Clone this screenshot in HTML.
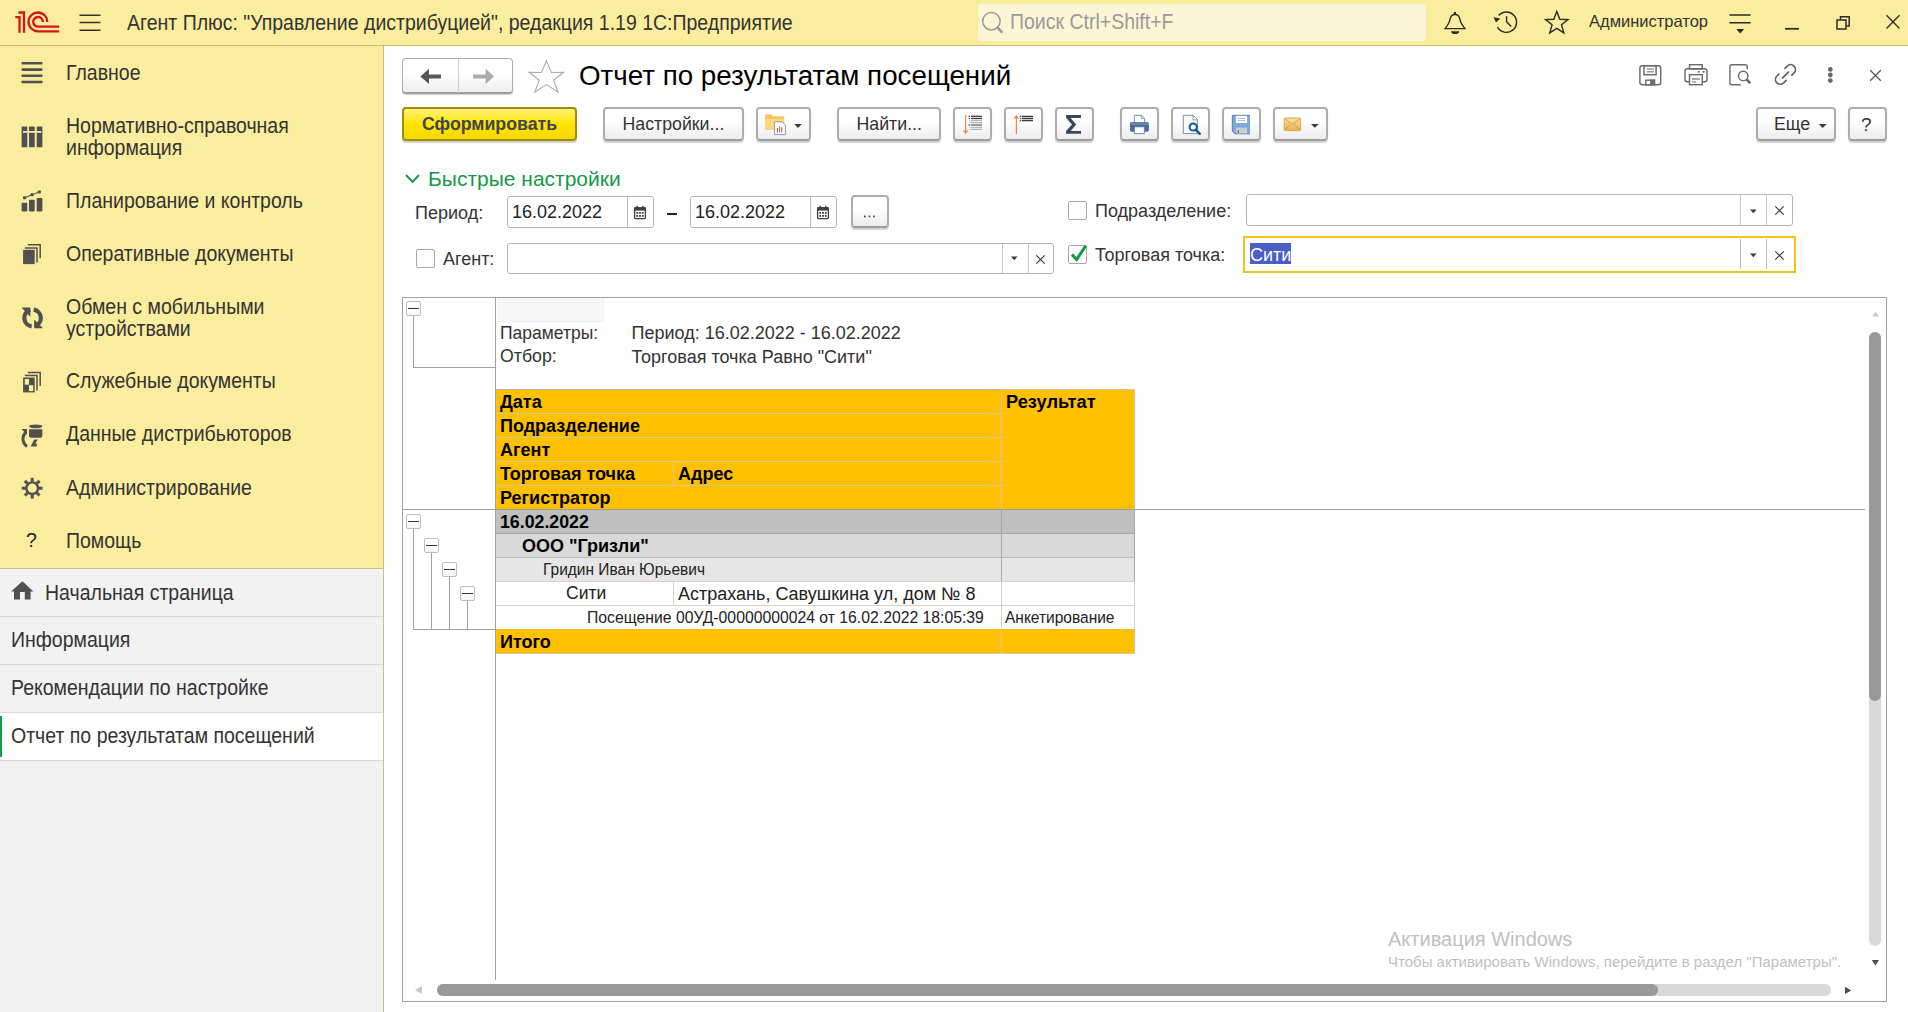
<!DOCTYPE html><html><head><meta charset="utf-8"><style>
html,body{margin:0;padding:0;width:1908px;height:1012px;overflow:hidden;background:#fff;font-family:"Liberation Sans",sans-serif;}
.a{position:absolute;box-sizing:border-box;}
.t{position:absolute;white-space:nowrap;line-height:1;transform-origin:0 0;}
</style></head><body>
<div class="a" style="left:0px;top:0px;width:1908px;height:45px;background:#FBED9E;"></div>
<div class="a" style="left:0px;top:45px;width:1908px;height:1px;background:#C7B96D;"></div>
<svg class="a" style="left:0px;top:0px;" width="62" height="40" viewBox="0 0 62 40"><g fill="none" stroke="#D7141A" stroke-width="2.3">
<path d="M15.3 17.1 H19.5 V32.8"/>
<path d="M18.4 12.5 H24 V32.8"/>
<path d="M47.3 22 A9.4 9.4 0 1 0 37.9 31.3 H59.2"/>
<path d="M42.8 22 A4.8 4.8 0 1 0 37.9 26.6 H59.2"/>
</g></svg>
<svg class="a" style="left:79px;top:0px;" width="23" height="40" viewBox="0 0 23 40"><g stroke="#333" stroke-width="1.5"><path d="M0.5 15.2H21.5M0.5 22.6H21.5M0.5 30.2H21.5"/></g></svg>
<div class="t" style="left:127px;top:11.94px;font-size:19.5px;color:#333;transform:scaleY(1.1);">Агент Плюс: "Управление дистрибуцией", редакция 1.19 1С:Предприятие</div>
<div class="a" style="left:978px;top:4px;width:448px;height:37px;background:#FDF6D6;border-radius:3px;"></div>
<svg class="a" style="left:970px;top:0px;" width="40" height="45" viewBox="0 0 40 45"><circle cx="21.4" cy="21.2" r="8.7" fill="none" stroke="#9a9a9a" stroke-width="1.5"/><path d="M26.8 27 L32.4 32.6" stroke="#9a9a9a" stroke-width="2.6"/></svg>
<div class="t" style="left:1010px;top:11.44px;font-size:19.5px;color:#9a9a9a;transform:scaleY(1.1);">Поиск Ctrl+Shift+F</div>
<svg class="a" style="left:1400px;top:0px;" width="508" height="45" viewBox="0 0 508 45"><g transform="translate(-1400 0)" fill="none" stroke="#2b2b2b" stroke-width="1.4">
<path d="M45 28.6 H65 C63 26 60.5 23.5 60 19.5 C59.5 16.5 58.5 14.5 55 14.5 C51.5 14.5 50.5 16.5 50 19.5 C49.5 23.5 47 26 45 28.6 Z" transform="translate(1400 0)"/>
<path d="M1497.5 27.2 A10.2 10.2 0 1 0 1498.6 15.5"/>
<path d="M1506.6 16.2 V21.8 L1511.2 26.6"/>
<path d="M1556.8 11.5 L1559.8 19.2 L1568 19.6 L1561.5 24.7 L1563.8 32.8 L1556.8 28.3 L1549.8 32.8 L1552.1 24.7 L1545.6 19.6 L1553.8 19.2 Z" stroke-linejoin="miter"/>
<path d="M1729.4 15.1 H1750.6 M1729.4 22.7 H1750.6" stroke-width="1.5"/>
<path d="M1785 28.8 H1799" stroke-width="1.7"/>
<rect x="1837" y="20" width="9" height="9" stroke-width="1.5"/>
<path d="M1840.5 19.5 V16.8 H1849.2 V25.9 H1846.5" stroke-width="1.5"/>
<path d="M1886.5 15.3 L1899.5 28.5 M1899.5 15.3 L1886.5 28.5" stroke-width="1.3"/>
</g>
<g transform="translate(-1400 0)" fill="#2b2b2b">
<circle cx="1454.9" cy="13" r="1.2"/>
<path d="M1451 31.2 H1459.3 A4.15 2.8 0 0 1 1451 31.2 Z"/>
<path d="M1493.5 17.2 L1500.3 18.4 L1496 22.6 Z"/>
<path d="M1736.3 29.1 H1744.1 L1740.2 33.6 Z"/>
</g></svg>
<div class="t" style="left:1589px;top:12.63px;font-size:16.5px;color:#333;">Администратор</div>
<div class="a" style="left:0px;top:46px;width:383px;height:522px;background:#FBED9E;"></div>
<div class="a" style="left:383px;top:46px;width:1px;height:966px;background:#CBC085;"></div>
<div class="a" style="left:0px;top:568px;width:383px;height:444px;background:#F2F2F2;"></div>
<div class="a" style="left:0px;top:568px;width:383px;height:1px;background:#CBBD80;"></div>
<div class="t" style="left:66px;top:61.64px;font-size:19.5px;color:#333;transform:scaleY(1.1);">Главное</div>
<div class="t" style="left:66px;top:114.84px;font-size:19.5px;color:#333;transform:scaleY(1.1);">Нормативно-справочная</div>
<div class="t" style="left:66px;top:137.34px;font-size:19.5px;color:#333;transform:scaleY(1.1);">информация</div>
<div class="t" style="left:66px;top:189.84px;font-size:19.5px;color:#333;transform:scaleY(1.1);">Планирование и контроль</div>
<div class="t" style="left:66px;top:242.84px;font-size:19.5px;color:#333;transform:scaleY(1.1);">Оперативные документы</div>
<div class="t" style="left:66px;top:295.84px;font-size:19.5px;color:#333;transform:scaleY(1.1);">Обмен с мобильными</div>
<div class="t" style="left:66px;top:318.34px;font-size:19.5px;color:#333;transform:scaleY(1.1);">устройствами</div>
<div class="t" style="left:66px;top:370.44px;font-size:19.5px;color:#333;transform:scaleY(1.1);">Служебные документы</div>
<div class="t" style="left:66px;top:422.84px;font-size:19.5px;color:#333;transform:scaleY(1.1);">Данные дистрибьюторов</div>
<div class="t" style="left:66px;top:476.54px;font-size:19.5px;color:#333;transform:scaleY(1.1);">Администрирование</div>
<div class="t" style="left:66px;top:529.54px;font-size:19.5px;color:#333;transform:scaleY(1.1);">Помощь</div>
<svg class="a" style="left:0px;top:0px;" width="60" height="520" viewBox="0 0 60 520"><g fill="#505050">
<rect x="21.5" y="62" width="21" height="2.6" rx="0.8"/><rect x="21.5" y="68.3" width="21" height="2.6" rx="0.8"/><rect x="21.5" y="74.5" width="21" height="2.6" rx="0.8"/><rect x="21.5" y="80.7" width="21" height="2.6" rx="0.8"/>
<rect x="21.6" y="126.6" width="5.7" height="20.7" rx="0.5"/><rect x="29" y="126.6" width="5.7" height="20.7" rx="0.5"/><rect x="36.7" y="126.6" width="5.7" height="20.7" rx="0.5"/>
<rect x="21.6" y="202.7" width="5.7" height="8.7" rx="0.8"/><rect x="29" y="199.8" width="5.7" height="11.6" rx="0.8"/><rect x="36.7" y="198" width="5.7" height="13.4" rx="0.8"/>
<rect x="23" y="196.3" width="3.2" height="3" rx="0.8"/><rect x="30.4" y="193.3" width="3.2" height="3" rx="0.8"/><rect x="37.8" y="190.4" width="3.2" height="3" rx="0.8"/>
<rect x="23.1" y="249.8" width="11.6" height="14.3"/>
<rect x="23.1" y="377.5" width="11.6" height="14.9"/>
</g>
<rect x="23" y="131" width="18.2" height="1.8" fill="#FBED9E"/>
<path d="M24.6 197.8 L32 194.8 L39.4 191.9" stroke="#505050" stroke-width="1.1" fill="none"/>
<g fill="none" stroke="#505050" stroke-width="1.5"><path d="M24.8 248 H37 V262.6"/><path d="M27.8 244.8 H40.2 V258.2"/>
<path d="M24.8 375.6 H37 V390.5"/><path d="M27.8 372.5 H40.2 V386"/></g>
<rect x="24.8" y="379" width="4.2" height="5.7" fill="#FBED9E"/><rect x="29" y="385.2" width="4.2" height="5.9" fill="#FBED9E"/>
<g fill="none" stroke="#505050" stroke-width="4.2"><path d="M30.3 309.95 A8.4 8.4 0 0 0 31.7 326.34"/><path d="M34.7 326.05 A8.4 8.4 0 0 0 33.7 309.66"/></g>
<path d="M21.5 307.6 H30.3 V316.8 Z M43 328.3 H34.2 V319.5 Z" fill="#505050"/>
<g fill="#505050"><ellipse cx="35.7" cy="426.3" rx="6.7" ry="1.9"/><path d="M29 429.3 H42.4 V435.2 A2.5 2.5 0 0 1 39.9 437.7 H31.5 A2.5 2.5 0 0 1 29 435.2 Z"/></g>
<path d="M26.3 432 A 9 9 0 0 0 27 446.4" fill="none" stroke="#505050" stroke-width="3"/>
<path d="M21.4 429 H27 V434.5 Z" fill="#505050"/>
<path d="M34.2 439.6 L37.8 439.6 L35.2 443.4 L36.9 443.4 L36.8 446.6 L30.8 446.6 L31.6 444.4 Z" fill="#505050"/>
<g fill="#505050"><circle cx="32.2" cy="488.2" r="7"/>
<g id="teeth"><rect x="30.7" y="477.8" width="3" height="4"/><rect x="30.7" y="494.6" width="3" height="4"/><rect x="21.8" y="486.7" width="4" height="3"/><rect x="38.6" y="486.7" width="4" height="3"/></g>
<g transform="rotate(45 32.2 488.2)"><rect x="30.7" y="477.8" width="3" height="4"/><rect x="30.7" y="494.6" width="3" height="4"/><rect x="21.8" y="486.7" width="4" height="3"/><rect x="38.6" y="486.7" width="4" height="3"/></g>
</g><circle cx="32.2" cy="488.2" r="4.6" fill="#FBED9E"/>
</svg>
<div class="t" style="left:26px;top:530.99px;font-size:19.5px;color:#222;">?</div>
<div class="a" style="left:0px;top:616px;width:383px;height:1px;background:#D9D9D9;"></div>
<div class="a" style="left:0px;top:664px;width:383px;height:1px;background:#D9D9D9;"></div>
<div class="a" style="left:0px;top:712px;width:383px;height:1px;background:#D9D9D9;"></div>
<div class="a" style="left:0px;top:760px;width:383px;height:1px;background:#D9D9D9;"></div>
<div class="a" style="left:0px;top:713px;width:383px;height:47px;background:#fff;"></div>
<div class="a" style="left:0px;top:716px;width:2px;height:41px;background:#169A4A;"></div>
<svg class="a" style="left:0px;top:570px;" width="50" height="40" viewBox="0 0 50 40"><path d="M22.4 11.3 L33.4 21.6 H30.6 V29.5 H24.8 V21.9 H20 V29.5 H14 V21.6 H11.2 Z" fill="#505050"/></svg>
<div class="t" style="left:45px;top:581.64px;font-size:19.5px;color:#333;transform:scaleY(1.1);">Начальная страница</div>
<div class="t" style="left:11px;top:629.44px;font-size:19.5px;color:#333;transform:scaleY(1.1);">Информация</div>
<div class="t" style="left:11px;top:677.44px;font-size:19.5px;color:#333;transform:scaleY(1.1);">Рекомендации по настройке</div>
<div class="t" style="left:11px;top:725.44px;font-size:19.5px;color:#333;transform:scaleY(1.1);">Отчет по результатам посещений</div>
<div class="a" style="left:402px;top:58px;width:111px;height:36px;background:linear-gradient(#ffffff 0%,#ffffff 40%,#efefef 100%);border:1px solid #ABABAB;border-bottom:2px solid #9E9E9E;border-radius:4px;box-shadow:0 1px 1px #d0d0d0;"></div>
<div class="a" style="left:458px;top:59px;width:1px;height:34px;background:#cfcfcf;"></div>
<svg class="a" style="left:400px;top:55px;" width="170" height="45" viewBox="0 0 170 45"><g transform="translate(-400 -55)">
<path d="M420.3 76.4 L429 68.8 V74.4 H441 V78.6 H429 V84 Z" fill="#595959"/>
<path d="M494 76.4 L485.6 68.8 V74.4 H473.1 V78.6 H485.6 V84 Z" fill="#ABABAB"/>
<path d="M546.4 60.8 L551.4 72.5 L563.6 72.3 L553.6 80.3 L558 92.2 L546.4 84.6 L534.8 92.2 L539.2 80.3 L529.2 72.3 L541.4 72.5 Z" fill="none" stroke="#A3ADB7" stroke-width="1.1" stroke-linejoin="miter"/>
</g></svg>
<div class="t" style="left:579px;top:62.31px;font-size:27.75px;color:#000;">Отчет по результатам посещений</div>
<svg class="a" style="left:1620px;top:55px;" width="280" height="40" viewBox="0 0 280 40"><g transform="translate(-1620 -55)">
<g fill="none" stroke="#6e6e6e" stroke-width="1.5">
<rect x="1639.9" y="65.7" width="20.8" height="19.1" rx="2.5"/>
<rect x="1644" y="65.7" width="12.1" height="9"/>
<rect x="1645.8" y="80.2" width="8.8" height="4.6"/>
</g>
<path d="M1646.6 69 H1654 M1646.6 71.8 H1654" stroke="#9a9a9a" stroke-width="1.4"/>
<rect x="1650" y="79.5" width="5" height="5.8" fill="#6e6e6e"/>
<g fill="none" stroke="#6a6a6a" stroke-width="1.4">
<rect x="1689.5" y="64.7" width="12.8" height="4.2"/>
<path d="M1689.5 81.8 H1687 A2.2 2.2 0 0 1 1685 79.6 V71.2 A2.5 2.5 0 0 1 1687.5 68.8 H1704.5 A2.5 2.5 0 0 1 1707 71.2 V79.6 A2.2 2.2 0 0 1 1704.8 81.8 H1702.3"/>
<rect x="1689.5" y="74.7" width="12.8" height="10"/>
<path d="M1729.9 69 V82.7 A2 2 0 0 0 1731.9 84.7 H1740.7 M1747.3 69.3 V66.7 A2 2 0 0 0 1745.3 64.7 H1731.9 A2 2 0 0 0 1729.9 66.7 V69"/>
<circle cx="1743.2" cy="75.9" r="4.7"/>
</g>
<g fill="#6a6a6a"><rect x="1697.8" y="71" width="2" height="1.6"/><rect x="1702.6" y="71" width="2" height="1.6"/></g>
<path d="M1692 79 H1700 M1692 81.9 H1696" stroke="#8a8a8a" stroke-width="1.4"/>
<path d="M1746.5 79.3 L1750.3 83.3" stroke="#6a6a6a" stroke-width="2.6"/>
<g fill="none" stroke="#626262" stroke-width="1.7">
<path d="M1784.4 68.9 L1787.2 66.1 A4.8 4.8 0 0 1 1794 72.9 L1791.3 75.7"/>
<path d="M1779.4 73.5 L1776.9 76 A4.8 4.8 0 0 0 1783.7 82.8 L1786.6 79.9"/>
<path d="M1782.2 78.4 L1788.8 71.6"/>
</g>
<g fill="#6a6a6a"><circle cx="1830.3" cy="69.4" r="2.4"/><circle cx="1830.3" cy="75" r="2.4"/><circle cx="1830.3" cy="80.6" r="2.4"/></g>
<path d="M1870.2 70.2 L1880.8 80.8 M1880.8 70.2 L1870.2 80.8" stroke="#555" stroke-width="1.3"/>
</g></svg>
<div class="a" style="left:402px;top:107px;width:175px;height:34px;background:linear-gradient(#FFF37A 0%,#FFE400 50%,#F4D800 100%);border:2px solid #9D8C0E;border-radius:4px;box-shadow:0 2px 1px #cfcfcf;"></div>
<div class="t" style="left:422px;top:115.52px;font-size:17.75px;font-weight:bold;color:#42454c;transform:scaleY(1.03);">Сформировать</div>
<div class="a" style="left:603px;top:107px;width:141px;height:34px;background:linear-gradient(#ffffff 0%,#ffffff 40%,#ececec 100%);border:2px solid #ADADAD;border-bottom-color:#9C9C9C;border-radius:4px;box-shadow:0 2px 1px #D2D2D2;"></div>
<div class="t" style="left:622.5px;top:114.67px;font-size:17.75px;color:#333;transform:scaleY(1.04);">Настройки...</div>
<div class="a" style="left:756px;top:107px;width:55px;height:34px;background:linear-gradient(#ffffff 0%,#ffffff 40%,#ececec 100%);border:2px solid #ADADAD;border-bottom-color:#9C9C9C;border-radius:4px;box-shadow:0 2px 1px #D2D2D2;"></div>
<svg class="a" style="left:756px;top:104px;" width="60" height="36" viewBox="0 0 60 36"><g transform="translate(-756 -104)">
<path d="M765 116 Q765 114.2 766.8 114.2 H771 L773 116.2 H783 Q784.2 116.2 784.2 117.4 V129.6 H765 Z" fill="#F3C75C"/>
<path d="M765 119 H784.2 V129.6 H765 Z" fill="#F8D77E"/>
<path d="M774.6 121.8 H782 L785.4 125.2 V134.6 H774.6 Z" fill="#fff" stroke="#8A9BB0" stroke-width="1"/>
<path d="M777.5 132.5 V128 M779.7 132.5 V126.5" stroke="#E04848" stroke-width="1.1"/>
<path d="M781.8 132.5 V127.5" stroke="#3BA03B" stroke-width="1.1"/>
<path d="M794.3 124 H801.8 L798 128 Z" fill="#3a3a3a"/>
</g></svg>
<div class="a" style="left:837px;top:107px;width:104px;height:34px;background:linear-gradient(#ffffff 0%,#ffffff 40%,#ececec 100%);border:2px solid #ADADAD;border-bottom-color:#9C9C9C;border-radius:4px;box-shadow:0 2px 1px #D2D2D2;"></div>
<div class="t" style="left:856.5px;top:114.67px;font-size:17.75px;color:#333;transform:scaleY(1.04);">Найти...</div>
<div class="a" style="left:953px;top:107px;width:39px;height:34px;background:linear-gradient(#ffffff 0%,#ffffff 40%,#ececec 100%);border:2px solid #ADADAD;border-bottom-color:#9C9C9C;border-radius:4px;box-shadow:0 2px 1px #D2D2D2;"></div>
<div class="a" style="left:1004px;top:107px;width:39px;height:34px;background:linear-gradient(#ffffff 0%,#ffffff 40%,#ececec 100%);border:2px solid #ADADAD;border-bottom-color:#9C9C9C;border-radius:4px;box-shadow:0 2px 1px #D2D2D2;"></div>
<div class="a" style="left:1055px;top:107px;width:39px;height:34px;background:linear-gradient(#ffffff 0%,#ffffff 40%,#ececec 100%);border:2px solid #ADADAD;border-bottom-color:#9C9C9C;border-radius:4px;box-shadow:0 2px 1px #D2D2D2;"></div>
<div class="a" style="left:1120px;top:107px;width:39px;height:34px;background:linear-gradient(#ffffff 0%,#ffffff 40%,#ececec 100%);border:2px solid #ADADAD;border-bottom-color:#9C9C9C;border-radius:4px;box-shadow:0 2px 1px #D2D2D2;"></div>
<div class="a" style="left:1171px;top:107px;width:39px;height:34px;background:linear-gradient(#ffffff 0%,#ffffff 40%,#ececec 100%);border:2px solid #ADADAD;border-bottom-color:#9C9C9C;border-radius:4px;box-shadow:0 2px 1px #D2D2D2;"></div>
<div class="a" style="left:1222px;top:107px;width:39px;height:34px;background:linear-gradient(#ffffff 0%,#ffffff 40%,#ececec 100%);border:2px solid #ADADAD;border-bottom-color:#9C9C9C;border-radius:4px;box-shadow:0 2px 1px #D2D2D2;"></div>
<svg class="a" style="left:950px;top:104px;" width="300" height="36" viewBox="0 0 300 36"><g transform="translate(-950 -104)">
<path d="M965.6 115 V132" stroke="#F0824A" stroke-width="1.2"/><path d="M962.8 130.6 H968.4 L965.6 134 Z" fill="#F0824A"/>
<g stroke-width="1.3"><path d="M971 116.3 H982" stroke="#3a3a3a"/><path d="M971 118.5 H982" stroke="#3a3a3a"/>
<path d="M971 120.6 H982 M971 122.6 H982 M971 127.3 H982 M971 129.4 H982" stroke="#b5b5b5"/>
<path d="M971 125 H982" stroke="#8a8a8a" stroke-width="1.7"/></g>
<g fill="#555"><rect x="968.6" y="115.6" width="1.5" height="1.4"/><rect x="968.6" y="117.8" width="1.5" height="1.4"/><rect x="968.6" y="124.3" width="1.5" height="1.4"/></g>
<g fill="#bbb"><rect x="969.3" y="120" width="1.2" height="1.2"/><rect x="969.3" y="122" width="1.2" height="1.2"/><rect x="969.3" y="126.7" width="1.2" height="1.2"/><rect x="969.3" y="128.8" width="1.2" height="1.2"/></g>
<path d="M1016.4 117.5 V134" stroke="#F0824A" stroke-width="1.2"/><path d="M1013.6 118.6 H1019.2 L1016.4 115 Z" fill="#F0824A"/>
<g stroke="#3a3a3a" stroke-width="1.3"><path d="M1022 116.3 H1033 M1022 118.5 H1033 M1022 120.7 H1033"/></g>
<g fill="#555"><rect x="1019.8" y="115.6" width="1.5" height="1.4"/><rect x="1019.8" y="117.8" width="1.5" height="1.4"/><rect x="1019.8" y="120" width="1.5" height="1.4"/></g>
<path d="M1066.1 115 H1081 V117.9 H1070.6 L1076.2 124.4 L1070.6 130.9 H1081 V133.8 H1066.1 V131 L1072 124.4 L1066.1 117.8 Z" fill="#34495E"/>
<path d="M1134.4 115.3 H1141.6 L1144.6 118.3 V123 H1134.4 Z" fill="#fff" stroke="#6d86a6" stroke-width="0.9"/>
<path d="M1141.3 115.5 V118.6 H1144.4" fill="none" stroke="#6d86a6" stroke-width="0.8"/>
<rect x="1130" y="122.1" width="18.9" height="9.7" rx="1.8" fill="#4A6D9A"/>
<rect x="1130.6" y="122.4" width="17.8" height="2.4" fill="#6B8CB6"/>
<path d="M1134.4 126.8 H1144.3 V133.6 H1134.4 Z" fill="#fff" stroke="#5c7ba3" stroke-width="0.9"/>
<path d="M1183.3 115.3 H1193.2 L1197.6 119.7 V133.6 H1183.3 Z" fill="#fafafa" stroke="#6d86a6" stroke-width="0.9"/>
<path d="M1193 115.5 V119.9 H1197.4" fill="none" stroke="#6d86a6" stroke-width="0.8"/>
<circle cx="1193.2" cy="127" r="3.6" fill="#fff" stroke="#0E5A8A" stroke-width="2"/>
<path d="M1195.8 129.8 L1199.8 133.8" stroke="#0E5A8A" stroke-width="2.4" stroke-linecap="round"/>
<path d="M1232.3 115.3 H1250.6 V133.8 H1235 L1232.3 131 Z" fill="#7FA8DA" stroke="#4B77B0" stroke-width="0.9"/>
<rect x="1235.9" y="115.8" width="11.2" height="7.2" fill="#fff"/>
<path d="M1237.5 118.5 H1245.5 M1237.5 120.6 H1245.5" stroke="#8fb0d8" stroke-width="0.8"/>
<rect x="1236" y="127.6" width="11" height="5.8" fill="#C9D2D0"/>
<rect x="1237.6" y="130" width="1.4" height="3" fill="#4B77B0"/>
</g></svg>
<div class="a" style="left:1273px;top:107px;width:55px;height:34px;background:linear-gradient(#ffffff 0%,#ffffff 40%,#ececec 100%);border:2px solid #ADADAD;border-bottom-color:#9C9C9C;border-radius:4px;box-shadow:0 2px 1px #D2D2D2;"></div>
<svg class="a" style="left:1270px;top:104px;" width="60" height="36" viewBox="0 0 60 36"><g transform="translate(-1270 -104)">
<defs><linearGradient id="env" x1="0" y1="0" x2="0" y2="1"><stop offset="0" stop-color="#FBE3A0"/><stop offset="1" stop-color="#EAB050"/></linearGradient></defs>
<rect x="1284.2" y="118" width="16.4" height="12.6" rx="1.2" fill="url(#env)" stroke="#D9A040" stroke-width="0.9"/>
<path d="M1284.6 118.6 L1292.4 124.6 L1300.2 118.6 M1284.6 130 L1290 125 M1300.2 130 L1294.8 125" fill="none" stroke="#D49A3A" stroke-width="0.9"/>
<path d="M1311 124 H1318.7 L1314.85 127.8 Z" fill="#3a3a3a"/>
</g></svg>
<div class="a" style="left:1756px;top:107px;width:80px;height:34px;background:linear-gradient(#ffffff 0%,#ffffff 40%,#ececec 100%);border:2px solid #ADADAD;border-bottom-color:#9C9C9C;border-radius:4px;box-shadow:0 2px 1px #D2D2D2;"></div>
<div class="t" style="left:1774px;top:114.67px;font-size:17.75px;color:#333;transform:scaleY(1.04);">Еще</div>
<svg class="a" style="left:1818px;top:124px;" width="10" height="6" viewBox="0 0 10 6"><path d="M0.7 0H8.7L4.7 4Z" fill="#3a3a3a"/></svg>
<div class="a" style="left:1848px;top:107px;width:39px;height:34px;background:linear-gradient(#ffffff 0%,#ffffff 40%,#ececec 100%);border:2px solid #ADADAD;border-bottom-color:#9C9C9C;border-radius:4px;box-shadow:0 2px 1px #D2D2D2;"></div>
<div class="t" style="left:1861px;top:114.72px;font-size:19px;color:#333;">?</div>
<svg class="a" style="left:404px;top:172px;" width="17" height="14" viewBox="0 0 17 14"><path d="M2 3L8.5 10L15 3" fill="none" stroke="#1C9B4D" stroke-width="2"/></svg>
<div class="t" style="left:428px;top:167.82px;font-size:21px;color:#15994A;">Быстрые настройки</div>
<div class="t" style="left:415px;top:203.76px;font-size:18px;color:#333;">Период:</div>
<div class="a" style="left:507px;top:196px;width:147px;height:32px;background:#fff;border:1px solid #b5b5b5;border-radius:3px;"></div>
<div class="a" style="left:627px;top:197px;width:1px;height:30px;background:#bdbdbd;"></div>
<div class="t" style="left:512px;top:202.76px;font-size:18px;color:#222;">16.02.2022</div>
<svg class="a" style="left:633px;top:204px;" width="14" height="17" viewBox="0 0 14 17"><rect x="1.6" y="3.6" width="10.8" height="11" rx="0.8" fill="#fff" stroke="#3f3f3f" stroke-width="1.3"/><rect x="1.6" y="3.6" width="10.8" height="3" fill="#3f3f3f"/><path d="M4.2 1.8V5M9.8 1.8V5" stroke="#3f3f3f" stroke-width="1.4"/><g fill="#3f3f3f"><rect x="3.3" y="8" width="1.8" height="1.8"/><rect x="6.1" y="8" width="1.8" height="1.8"/><rect x="8.9" y="8" width="1.8" height="1.8"/><rect x="3.3" y="11" width="1.8" height="1.8"/><rect x="6.1" y="11" width="1.8" height="1.8"/><rect x="8.9" y="11" width="1.8" height="1.8"/></g></svg>
<div class="a" style="left:667px;top:213px;width:10px;height:2px;background:#222;"></div>
<div class="a" style="left:690px;top:196px;width:147px;height:32px;background:#fff;border:1px solid #b5b5b5;border-radius:3px;"></div>
<div class="a" style="left:810px;top:197px;width:1px;height:30px;background:#bdbdbd;"></div>
<div class="t" style="left:695px;top:202.76px;font-size:18px;color:#222;">16.02.2022</div>
<svg class="a" style="left:816px;top:204px;" width="14" height="17" viewBox="0 0 14 17"><rect x="1.6" y="3.6" width="10.8" height="11" rx="0.8" fill="#fff" stroke="#3f3f3f" stroke-width="1.3"/><rect x="1.6" y="3.6" width="10.8" height="3" fill="#3f3f3f"/><path d="M4.2 1.8V5M9.8 1.8V5" stroke="#3f3f3f" stroke-width="1.4"/><g fill="#3f3f3f"><rect x="3.3" y="8" width="1.8" height="1.8"/><rect x="6.1" y="8" width="1.8" height="1.8"/><rect x="8.9" y="8" width="1.8" height="1.8"/><rect x="3.3" y="11" width="1.8" height="1.8"/><rect x="6.1" y="11" width="1.8" height="1.8"/><rect x="8.9" y="11" width="1.8" height="1.8"/></g></svg>
<div class="a" style="left:851px;top:195px;width:38px;height:33px;background:linear-gradient(#ffffff 0%,#ffffff 40%,#ececec 100%);border:2px solid #ADADAD;border-bottom-color:#9C9C9C;border-radius:4px;box-shadow:0 2px 1px #D2D2D2;"></div>
<svg class="a" style="left:860px;top:212px;" width="20" height="8" viewBox="0 0 20 8"><g fill="#444"><rect x="4" y="3.6" width="1.7" height="1.7"/><rect x="8.6" y="3.6" width="1.7" height="1.7"/><rect x="13.2" y="3.6" width="1.7" height="1.7"/></g></svg>
<div class="a" style="left:416px;top:249px;width:19px;height:19px;background:#fff;border:1px solid #a8a8a8;border-radius:2px;"></div>
<div class="t" style="left:443px;top:249.76px;font-size:18px;color:#333;">Агент:</div>
<div class="a" style="left:507px;top:243px;width:547px;height:31px;background:#fff;border:1px solid #b5b5b5;border-radius:3px;"></div>
<div class="a" style="left:1002px;top:244px;width:1px;height:29px;background:#c8c8c8;"></div>
<div class="a" style="left:1028px;top:244px;width:1px;height:29px;background:#c8c8c8;"></div>
<svg class="a" style="left:1010px;top:256px;" width="10" height="6" viewBox="0 0 10 6"><path d="M1 0.5H7.6L4.3 4.2Z" fill="#3a3a3a"/></svg>
<svg class="a" style="left:1035px;top:254px;" width="11" height="11" viewBox="0 0 11 11"><path d="M1.3 1.3L9.7 9.7M9.7 1.3L1.3 9.7" stroke="#3a3a3a" stroke-width="1.2"/></svg>
<div class="a" style="left:1068px;top:201px;width:19px;height:19px;background:#fff;border:1px solid #a8a8a8;border-radius:2px;"></div>
<div class="t" style="left:1095px;top:201.76px;font-size:18px;color:#333;">Подразделение:</div>
<div class="a" style="left:1246px;top:194px;width:547px;height:32px;background:#fff;border:1px solid #b5b5b5;border-radius:3px;"></div>
<div class="a" style="left:1740px;top:195px;width:1px;height:30px;background:#c8c8c8;"></div>
<div class="a" style="left:1766px;top:195px;width:1px;height:30px;background:#c8c8c8;"></div>
<svg class="a" style="left:1749px;top:209px;" width="10" height="6" viewBox="0 0 10 6"><path d="M1 0.5H7.6L4.3 4.2Z" fill="#3a3a3a"/></svg>
<svg class="a" style="left:1774px;top:205px;" width="11" height="11" viewBox="0 0 11 11"><path d="M1.3 1.3L9.7 9.7M9.7 1.3L1.3 9.7" stroke="#3a3a3a" stroke-width="1.2"/></svg>
<div class="a" style="left:1068px;top:245px;width:19px;height:19px;background:#fff;border:1px solid #a8a8a8;border-radius:2px;"></div>
<svg class="a" style="left:1060px;top:235px;" width="40" height="35" viewBox="0 0 40 35"><path d="M12 19.5 L16.6 24.6 L25.8 10.6" fill="none" stroke="#0E9A48" stroke-width="3"/></svg>
<div class="t" style="left:1095px;top:245.76px;font-size:18px;color:#333;">Торговая точка:</div>
<div class="a" style="left:1243px;top:236px;width:553px;height:37px;background:#fff;border:2px solid #F5C21B;"></div>
<div class="a" style="left:1740px;top:239px;width:1px;height:30px;background:#bdbdbd;"></div>
<div class="a" style="left:1766px;top:239px;width:1px;height:30px;background:#bdbdbd;"></div>
<svg class="a" style="left:1749px;top:253px;" width="10" height="6" viewBox="0 0 10 6"><path d="M1 0.5H7.6L4.3 4.2Z" fill="#3a3a3a"/></svg>
<svg class="a" style="left:1774px;top:250px;" width="11" height="11" viewBox="0 0 11 11"><path d="M1.3 1.3L9.7 9.7M9.7 1.3L1.3 9.7" stroke="#3a3a3a" stroke-width="1.2"/></svg>
<div class="a" style="left:1250px;top:243px;width:41px;height:21px;background:#4A5EC6;"></div>
<div class="t" style="left:1250px;top:245.76px;font-size:18px;color:#fff;">Сити</div>
<div class="a" style="left:402px;top:297px;width:1485px;height:705px;background:#fff;border:1px solid #A0A0A0;"></div>
<div class="a" style="left:495px;top:298px;width:1px;height:682px;background:#A0A0A0;"></div>
<div class="a" style="left:497px;top:298px;width:107px;height:24px;background:#F7F7F7;border-right:1px solid #EFEFEF;border-bottom:1px solid #EFEFEF;"></div>
<div class="a" style="left:413px;top:316px;width:1px;height:52px;background:#A0A0A0;"></div>
<div class="a" style="left:413px;top:367px;width:82px;height:1px;background:#A0A0A0;"></div>
<div class="a" style="left:406px;top:301px;width:15px;height:15px;background:linear-gradient(#fff 50%,#f4f4f4);border:1px solid #BDBDBD;border-radius:2px;"></div>
<div class="a" style="left:408px;top:308px;width:11px;height:1px;background:#333;"></div>
<div class="t" style="left:500px;top:323.59px;font-size:17.5px;color:#333;transform:scaleY(1.04);">Параметры:</div>
<div class="t" style="left:631.5px;top:323.76px;font-size:18px;color:#333;">Период: 16.02.2022 - 16.02.2022</div>
<div class="t" style="left:500px;top:347.52px;font-size:17.75px;color:#333;transform:scaleY(1.03);">Отбор:</div>
<div class="t" style="left:631.5px;top:347.76px;font-size:18px;color:#333;">Торговая точка Равно "Сити"</div>
<div class="a" style="left:496px;top:389px;width:639px;height:120px;background:#FFC000;"></div>
<div class="a" style="left:496px;top:389px;width:639px;height:1px;background:#B9B4A6;"></div>
<div class="a" style="left:496px;top:413px;width:506px;height:1px;background:#D9C79A;"></div>
<div class="a" style="left:496px;top:437px;width:506px;height:1px;background:#D9C79A;"></div>
<div class="a" style="left:496px;top:461px;width:506px;height:1px;background:#D9C79A;"></div>
<div class="a" style="left:496px;top:485px;width:506px;height:1px;background:#D9C79A;"></div>
<div class="a" style="left:1134px;top:389px;width:1px;height:120px;background:#D9C79A;"></div>
<div class="a" style="left:1001px;top:389px;width:1px;height:120px;background:#D9C79A;"></div>
<div class="a" style="left:1001px;top:389px;width:134px;height:1px;background:#D9C79A;"></div>
<div class="a" style="left:673px;top:461px;width:1px;height:24px;background:#D9C79A;"></div>
<div class="t" style="left:500px;top:393.36px;font-size:18px;font-weight:bold;color:#000;">Дата</div>
<div class="t" style="left:500px;top:417.36px;font-size:18px;font-weight:bold;color:#000;">Подразделение</div>
<div class="t" style="left:500px;top:441.36px;font-size:18px;font-weight:bold;color:#000;">Агент</div>
<div class="t" style="left:500px;top:465.16px;font-size:18px;font-weight:bold;color:#000;">Торговая точка</div>
<div class="t" style="left:678px;top:465.16px;font-size:18px;font-weight:bold;color:#000;">Адрес</div>
<div class="t" style="left:500px;top:489.16px;font-size:18px;font-weight:bold;color:#000;">Регистратор</div>
<div class="t" style="left:1006px;top:393.15px;font-size:18.25px;font-weight:bold;color:#000;">Результат</div>
<div class="a" style="left:403px;top:509px;width:1462px;height:1px;background:#A0A0A0;"></div>
<div class="a" style="left:496px;top:510px;width:639px;height:23px;background:#BFBFBF;"></div>
<div class="a" style="left:496px;top:533px;width:639px;height:24px;background:#D9D9D9;"></div>
<div class="a" style="left:496px;top:557px;width:639px;height:24px;background:#E6E6E6;"></div>
<div class="a" style="left:496px;top:653px;width:639px;height:0px;"></div>
<div class="a" style="left:496px;top:533px;width:639px;height:1px;background:#A8A8A8;"></div>
<div class="a" style="left:496px;top:557px;width:639px;height:1px;background:#BDBDBD;"></div>
<div class="a" style="left:1001px;top:510px;width:1px;height:71px;background:#A8A8A8;"></div>
<div class="a" style="left:1134px;top:510px;width:1px;height:71px;background:#A8A8A8;"></div>
<div class="a" style="left:496px;top:581px;width:639px;height:1px;background:#D8D0C0;"></div>
<div class="a" style="left:496px;top:605px;width:639px;height:1px;background:#D8D0C0;"></div>
<div class="a" style="left:496px;top:629px;width:639px;height:1px;background:#D8D0C0;"></div>
<div class="a" style="left:1001px;top:581px;width:1px;height:48px;background:#D8D0C0;"></div>
<div class="a" style="left:1134px;top:581px;width:1px;height:48px;background:#D8D0C0;"></div>
<div class="a" style="left:673px;top:581px;width:1px;height:24px;background:#D8D0C0;"></div>
<div class="a" style="left:496px;top:629px;width:639px;height:24px;background:#FFC000;"></div>
<div class="a" style="left:1001px;top:629px;width:1px;height:24px;background:#D9C79A;"></div>
<div class="a" style="left:1134px;top:629px;width:1px;height:24px;background:#D9C79A;"></div>
<div class="a" style="left:496px;top:653px;width:639px;height:1px;background:#D9C79A;"></div>
<div class="t" style="left:500px;top:513.97px;font-size:17.75px;font-weight:bold;color:#000;">16.02.2022</div>
<div class="t" style="left:522px;top:537.16px;font-size:18px;font-weight:bold;color:#000;">ООО "Гризли"</div>
<div class="t" style="left:543px;top:561.35px;font-size:15.5px;color:#222;transform:scaleY(1.04);">Гридин Иван Юрьевич</div>
<div class="t" style="left:566px;top:585.44px;font-size:17.5px;color:#222;transform:scaleY(1.03);">Сити</div>
<div class="t" style="left:678px;top:585.46px;font-size:18px;color:#222;">Астрахань, Савушкина ул, дом № 8</div>
<div class="t" style="left:587px;top:609.23px;font-size:15.75px;color:#222;transform:scaleY(1.04);">Посещение 00УД-00000000024 от 16.02.2022 18:05:39</div>
<div class="t" style="left:1005px;top:609.45px;font-size:15.5px;color:#222;transform:scaleY(1.04);">Анкетирование</div>
<div class="t" style="left:500px;top:633.06px;font-size:18px;font-weight:bold;color:#000;">Итого</div>
<div class="a" style="left:413px;top:529px;width:1px;height:100px;background:#A0A0A0;"></div>
<div class="a" style="left:431px;top:553px;width:1px;height:76px;background:#A0A0A0;"></div>
<div class="a" style="left:449px;top:577px;width:1px;height:52px;background:#A0A0A0;"></div>
<div class="a" style="left:467px;top:601px;width:1px;height:28px;background:#A0A0A0;"></div>
<div class="a" style="left:413px;top:629px;width:82px;height:1px;background:#A0A0A0;"></div>
<div class="a" style="left:406px;top:514px;width:15px;height:15px;background:linear-gradient(#fff 50%,#f4f4f4);border:1px solid #BDBDBD;border-radius:2px;"></div>
<div class="a" style="left:408px;top:521px;width:11px;height:1px;background:#333;"></div>
<div class="a" style="left:424px;top:538px;width:15px;height:15px;background:linear-gradient(#fff 50%,#f4f4f4);border:1px solid #BDBDBD;border-radius:2px;"></div>
<div class="a" style="left:426px;top:545px;width:11px;height:1px;background:#333;"></div>
<div class="a" style="left:442px;top:562px;width:15px;height:15px;background:linear-gradient(#fff 50%,#f4f4f4);border:1px solid #BDBDBD;border-radius:2px;"></div>
<div class="a" style="left:444px;top:569px;width:11px;height:1px;background:#333;"></div>
<div class="a" style="left:460px;top:586px;width:15px;height:15px;background:linear-gradient(#fff 50%,#f4f4f4);border:1px solid #BDBDBD;border-radius:2px;"></div>
<div class="a" style="left:462px;top:593px;width:11px;height:1px;background:#333;"></div>
<svg class="a" style="left:1870px;top:310px;" width="10" height="8" viewBox="0 0 10 8"><path d="M2.2 6.6H8.7L5.45 1.4Z" fill="#c8c8c8"/></svg>
<div class="a" style="left:1869px;top:332px;width:12px;height:614px;background:#D9D9D9;border-radius:6px;"></div>
<div class="a" style="left:1869px;top:332px;width:12px;height:369px;background:#999;border-radius:6px;"></div>
<svg class="a" style="left:1870px;top:958px;" width="10" height="9" viewBox="0 0 10 9"><path d="M1.8 2H9L5.4 7.6Z" fill="#4a4a4a"/></svg>
<svg class="a" style="left:414px;top:985px;" width="10" height="10" viewBox="0 0 10 10"><path d="M8 1V9L1 5Z" fill="#c8c8c8"/></svg>
<div class="a" style="left:437px;top:984px;width:1394px;height:12px;background:#D9D9D9;border-radius:6px;"></div>
<div class="a" style="left:437px;top:984px;width:1221px;height:12px;background:#999;border-radius:6px;"></div>
<svg class="a" style="left:1843px;top:985px;" width="10" height="10" viewBox="0 0 10 10"><path d="M2 1.8V9L8.2 5.4Z" fill="#4a4a4a"/></svg>
<div class="t" style="left:1388px;top:929.07px;font-size:20px;color:#C0C0C0;">Активация Windows</div>
<div class="t" style="left:1388px;top:954.30px;font-size:15px;color:#C0C0C0;">Чтобы активировать Windows, перейдите в раздел "Параметры".</div>
</body></html>
